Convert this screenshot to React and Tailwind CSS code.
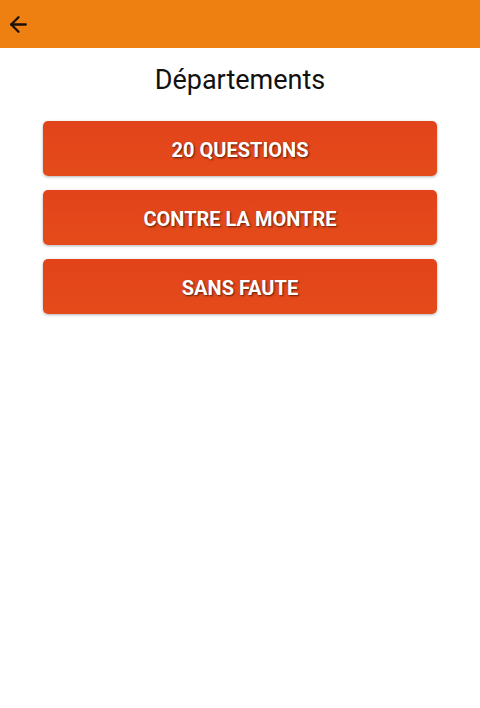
import { ArrowLeft } from "lucide-react";

const modes = ["20 QUESTIONS", "CONTRE LA MONTRE", "SANS FAUTE"];

export default function App() {
  return (
    <div className="w-[480px] h-[708px] bg-white font-['Roboto',sans-serif]">
      {/* Top bar */}
      <div className="h-12 bg-[#ee8012] flex items-center px-[6px]">
        <ArrowLeft size={25} strokeWidth={2.2} className="text-[#1a1008]" />
      </div>

      <h1 className="text-center text-[27px] text-[#111] mt-[16px] leading-8">Départements</h1>

      <div className="flex flex-col gap-[14px] px-[43px] mt-[25px]">
        {modes.map((m) => (
          <button
            key={m}
            type="button"
            className="h-[55px] rounded-[5px] bg-gradient-to-b from-[#e2431a] to-[#e44b1a] text-white font-bold text-[20px] pt-[2px] shadow-[0_1px_3px_rgba(0,0,0,0.3)] [text-shadow:1px_1px_2px_rgba(0,0,0,0.6)]"
          >
            {m}
          </button>
        ))}
      </div>
    </div>
  );
}
